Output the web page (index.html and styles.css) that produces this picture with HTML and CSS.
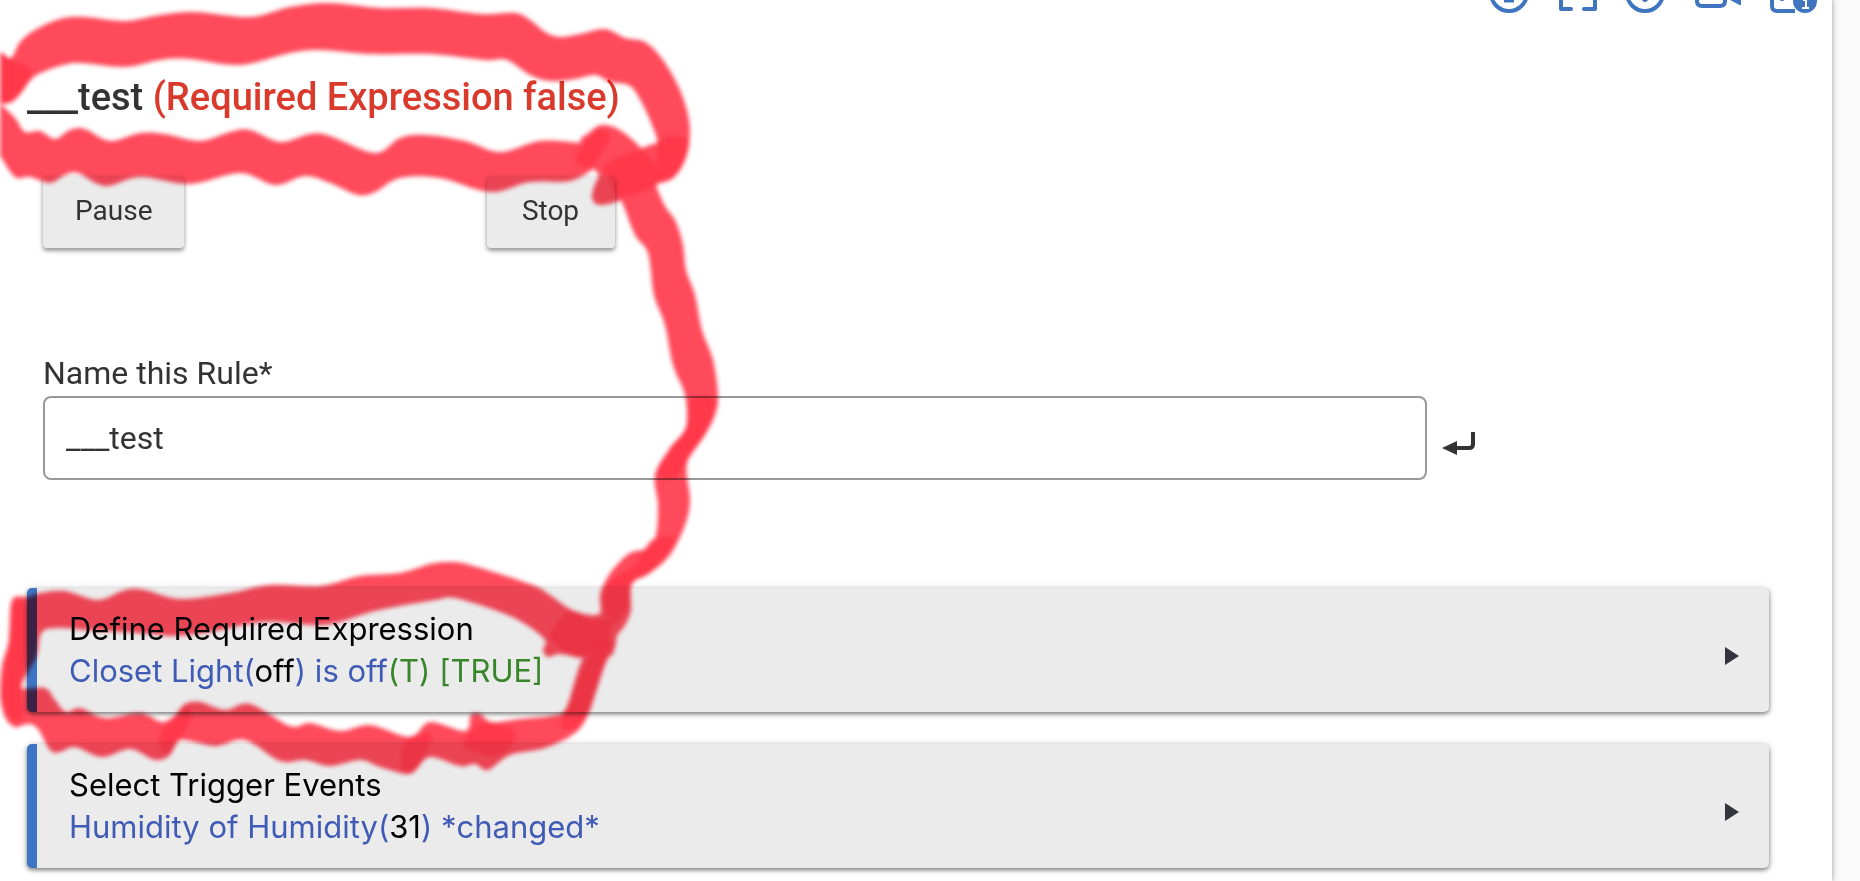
FILE: index.html
```
<!DOCTYPE html>
<html lang="en">
<head>
    <meta charset="UTF-8">
    <meta name="viewport" content="width=device-width, initial-scale=1.0">
    <title>Rule Machine</title>
    <link rel="stylesheet" href="styles.css">
</head>
<body>
    <main class="page">
        <nav class="toolbar">
            <a href="#" aria-label="Info">
                <svg width="40" height="16" viewBox="0 0 40 16"><circle cx="20" cy="-7" r="18" fill="none" stroke="#3f74bf" stroke-width="4"/><path d="M15 1H25" stroke="#3f74bf" stroke-width="3"/></svg>
            </a>
            <a href="#" aria-label="Full screen">
                <svg width="40" height="16" viewBox="0 0 40 16"><path d="M4 -4V9H14M27 9H38V-4" fill="none" stroke="#3f74bf" stroke-width="4" stroke-linecap="round" stroke-linejoin="round"/></svg>
            </a>
            <a href="#" aria-label="Help">
                <svg width="40" height="16" viewBox="0 0 40 16"><circle cx="20" cy="-7" r="18" fill="none" stroke="#3f74bf" stroke-width="4"/><circle cx="20" cy="-1" r="3" fill="#3f74bf"/></svg>
            </a>
            <a href="#" aria-label="Video">
                <svg width="48" height="16" viewBox="0 0 48 16"><path d="M4 -10V1Q4 6 9 6H27Q32 6 32 1V-10M34 -4L47 3V-10" fill="none" stroke="#3f74bf" stroke-width="4" stroke-linejoin="round"/></svg>
            </a>
            <a href="#" aria-label="Documentation">
                <svg width="48" height="16" viewBox="0 0 48 16"><path d="M3 -10V6Q3 11 8 11H26" fill="none" stroke="#3f74bf" stroke-width="4"/><circle cx="13" cy="-2" r="3" fill="#3f74bf"/><circle cx="36" cy="1" r="12" fill="#3f74bf"/><path d="M34 0H37V8M33 8H40" fill="none" stroke="#fff" stroke-width="2"/></svg>
            </a>
        </nav>

        <h1>___test <span class="error">(Required Expression false)</span></h1>

        <form class="settings">
            <div class="actions">
                <div><button type="button" class="btn">Pause</button></div>
                <div><button type="button" class="btn">Stop</button></div>
            </div>
            <label for="rule-name">Name this Rule*</label>
            <div class="field">
                <input type="text" id="rule-name" value="___test">
                <svg class="enter" width="34" height="24" viewBox="0 0 34 24"><path d="M31 0V12Q31 16 27 16H12" fill="none" stroke="#333" stroke-width="4"/><path d="M0 16L15 9V23Z" fill="#333"/></svg>
            </div>
        </form>

        <div class="sections">
            <button type="button" class="section">
                <span>Define Required Expression<br>
                <span class="value">Closet Light(<span class="state">off</span>) is off<span class="true">(T) [TRUE]</span></span></span>
                <svg class="arrow" width="14" height="18" viewBox="0 0 14 18"><path d="M0 0L14 9L0 18Z" fill="#34343c"/></svg>
            </button>
            <button type="button" class="section">
                <span>Select Trigger Events<br>
                <span class="value">Humidity of Humidity(<span class="state">31</span>) *changed*</span></span>
                <svg class="arrow" width="14" height="18" viewBox="0 0 14 18"><path d="M0 0L14 9L0 18Z" fill="#34343c"/></svg>
            </button>
        </div>
    </main>

    <svg class="marker" id="marker" width="760" height="800" viewBox="0 0 760 800"></svg>
    <script src="marker.js"></script>
</body>
</html>
```
FILE: styles.css
```
* {
    box-sizing: border-box;
}
body {
    margin: 0;
    background-color: #fafafa;
    color: #333;
    font-family: Roboto, sans-serif;
    position: relative;
    overflow: hidden;
}
.page {
    min-height: 100vh;
    margin-right: 28px;
    padding: 0 15px 13px 27px;
    background-color: #fff;
    box-shadow: 0 0 6px rgba(0, 0, 0, 0.4);
}
.toolbar {
    display: flex;
    justify-content: flex-end;
    gap: 28px;
}
.toolbar svg {
    display: block;
}
h1 {
    margin: 59px 0 57px;
    font-size: 38px;
    font-weight: 500;
    line-height: 44px;
}
.error {
    color: #d93a2b;
}
.settings {
    padding-left: 16px;
}
.actions {
    display: grid;
    grid-template-columns: repeat(4, 1fr);
    margin-bottom: 105px;
}
.btn {
    height: 72px;
    min-width: 128px;
    padding: 0 32px 4px;
    border: none;
    border-radius: 4px;
    background-color: #ebebeb;
    color: #333;
    font-family: inherit;
    font-size: 28px;
    box-shadow: 0 3px 4px rgba(0, 0, 0, 0.35), 0 1px 6px rgba(0, 0, 0, 0.12);
    cursor: pointer;
}
label {
    display: block;
    margin-bottom: 3px;
    font-size: 32px;
    line-height: 40px;
}
.field {
    display: flex;
    align-items: center;
    gap: 15px;
}
input {
    width: 78%;
    height: 84px;
    padding: 0 21px;
    border: 2px solid #999;
    border-radius: 8px;
    background-color: #fff;
    color: #333;
    font-family: inherit;
    font-size: 32px;
}
.enter {
    margin-top: 12px;
}
.sections {
    display: flex;
    flex-direction: column;
    gap: 32px;
    margin: 108px 48px 0 0;
}
.section {
    display: flex;
    align-items: center;
    justify-content: space-between;
    padding: 20px 30px 20px 32px;
    border: none;
    border-left: 10px solid #3d74c4;
    border-radius: 5px;
    background-color: #ebebeb;
    color: #000;
    font-family: Inter, sans-serif;
    font-size: 31px;
    line-height: 42px;
    text-align: left;
    box-shadow: 0 2px 4px rgba(0, 0, 0, 0.45), 0 1px 8px rgba(0, 0, 0, 0.15);
    cursor: pointer;
}
.arrow {
    margin-top: 12px;
}
.value {
    color: #3f5bb5;
}
.state {
    color: #000;
}
.true {
    color: #37862a;
}
.marker {
    position: absolute;
    top: 0;
    left: 0;
    mix-blend-mode: multiply;
    filter: blur(2px);
    pointer-events: none;
}
.ink {
    fill: #ff4a5b;
}
.ink-heavy {
    fill: #ff3346;
    opacity: 0.8;
}
```
FILE: marker.js
```
// outlines of the marker strokes, [x, y, x, y, ...]
const strokes = [
    // connector between the two loops
    ["ink", [580,143, 590,132, 598,126, 606,125, 618,129, 635,142, 650,160, 656,185, 665,206, 676,222, 683,245, 686,270, 695,295, 702,330, 713,360, 718,395, 715,415, 705,435, 687,463, 690,500, 685,525, 670,555, 650,573, 632,584, 631,610, 625,625, 614,640, 612,655, 590,650, 600,615, 600,595, 606,580, 615,567, 630,553, 648,548, 656,535, 658,505, 655,475, 670,448, 686,427, 685,395, 673,365, 665,325, 654,295, 648,253, 635,235, 622,202, 612,185, 595,170]],
    // top loop
    ["ink", [-8,48, 0,52, 11,58, 20,42, 35,30, 60,19, 85,17, 125,21, 160,15, 195,12, 250,17, 290,7, 330,3, 380,8, 430,8, 480,14, 515,13, 530,20, 545,32, 560,37, 580,34, 605,29, 625,38, 645,42, 663,60, 680,90, 689,120, 689,145, 683,165, 672,179, 655,185, 625,199, 600,205, 592,197, 597,180, 608,163, 630,153, 650,145, 657,142, 654,130, 643,105, 630,86, 610,82, 595,75, 575,79, 550,81, 530,75, 507,60, 485,60, 430,54, 370,54, 320,50, 290,53, 240,65, 190,59, 160,60, 125,67, 80,63, 60,66, 35,76, 22,92, 12,102, 0,103, -8,98]],
    ["ink", [-8,100, 0,104, 15,118, 25,132, 40,131, 55,139, 70,130, 85,129, 110,141, 140,133, 165,134, 200,141, 230,132, 250,130, 280,142, 310,134, 330,136, 375,153, 400,138, 425,135, 465,141, 500,152, 540,141, 580,143, 610,145, 610,158, 595,168, 570,181, 530,182, 490,192, 440,178, 400,178, 375,192, 358,195, 330,183, 305,176, 275,185, 240,173, 190,184, 140,177, 105,186, 78,173, 65,175, 50,183, 30,177, 15,177, 0,156, -8,150]],
    // bottom loop
    ["ink", [12,600, 28,597, 40,593, 65,591, 98,600, 125,590, 145,590, 180,599, 230,593, 270,585, 320,586, 360,576, 400,573, 430,564, 450,562, 470,565, 530,584, 550,595, 570,609, 590,615, 612,616, 614,650, 585,658, 560,654, 548,657, 543,650, 545,640, 525,624, 500,612, 455,598, 435,600, 375,611, 325,625, 265,622, 210,632, 175,636, 150,634, 120,632, 85,630, 60,628, 42,632, 37,655, 28,672, 22,688, 45,688, 55,700, 66,712, 80,708, 105,718, 140,713, 162,722, 175,715, 185,704, 200,702, 225,710, 250,704, 290,726, 310,723, 340,731, 370,725, 410,737, 430,722, 465,731, 471,715, 480,714, 492,722, 520,719, 550,716, 565,710, 575,680, 582,660, 600,625, 614,642, 605,665, 596,692, 588,715, 575,733, 545,748, 510,755, 488,770, 475,764, 460,766, 430,757, 415,771, 405,774, 380,767, 360,760, 330,766, 305,760, 280,761, 245,740, 215,746, 180,740, 170,755, 155,760, 130,749, 102,757, 75,747, 60,752, 50,750, 38,729, 28,724, 15,727, 5,717, 0,695, 2,665, 9,640]],
    // spots the marker went over twice
    ["ink-heavy", [606,165, 640,151, 655,165, 657,184, 620,197, 610,180]],
    ["ink-heavy", [575,160, 588,140, 600,130, 610,136, 600,155, 590,167]],
    ["ink-heavy", [660,140, 688,140, 682,165, 670,178, 658,176]],
    ["ink-heavy", [-4,54, 12,60, 32,72, 20,92, 8,102, -4,100]],
    ["ink-heavy", [690,400, 716,400, 704,435, 685,463, 675,478, 657,474, 670,450, 686,428]],
    ["ink-heavy", [652,540, 675,540, 650,572, 632,583, 628,605, 612,625, 604,600, 610,582, 635,565]],
    ["ink-heavy", [550,637, 558,622, 570,611, 590,620, 608,620, 608,640, 585,655, 565,651]],
    ["ink-heavy", [600,640, 612,645, 600,672, 588,710, 575,728, 560,725, 572,700, 585,665]],
    ["ink-heavy", [467,736, 480,724, 500,725, 515,732, 510,748, 494,756, 475,752, 463,746]],
    ["ink-heavy", [405,742, 420,734, 432,736, 424,755, 412,771, 401,768]],
    ["ink-heavy", [162,730, 175,718, 184,708, 192,716, 180,738, 170,752, 160,748]],
    ["ink-heavy", [13,605, 26,605, 27,650, 21,685, 24,715, 12,720, 3,695, 8,655]],
];

// closed curve that passes through every point
function outline(p) {
    const n = p.length / 2;
    const at = i => [p[((i + n) % n) * 2], p[((i + n) % n) * 2 + 1]];
    let d = `M${at(0)}`;
    for (let i = 0; i < n; i++) {
        const [a, b, c, e] = [at(i - 1), at(i), at(i + 1), at(i + 2)];
        d += `C${b[0] + (c[0] - a[0]) / 6},${b[1] + (c[1] - a[1]) / 6} ${c[0] - (e[0] - b[0]) / 6},${c[1] - (e[1] - b[1]) / 6} ${c}`;
    }
    return d + "Z";
}

const marker = document.getElementById("marker");
for (const [name, points] of strokes) {
    const path = document.createElementNS("http://www.w3.org/2000/svg", "path");
    path.setAttribute("class", name);
    path.setAttribute("d", outline(points));
    marker.appendChild(path);
}
```
